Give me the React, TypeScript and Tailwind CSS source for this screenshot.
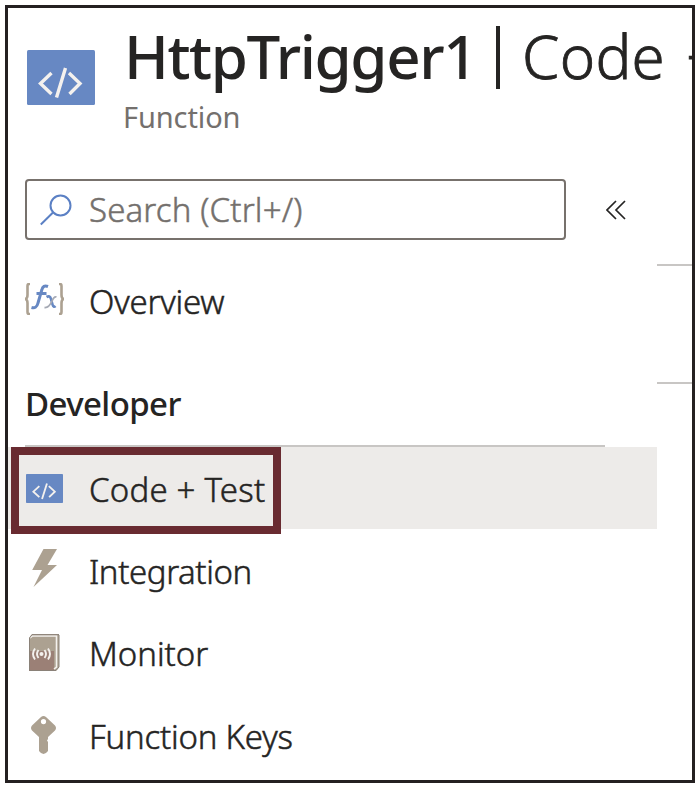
import type { ReactNode } from "react";

function CodeIcon({ className }: { className: string }) {
  return (
    <svg className={className} viewBox="0 0 68 55" preserveAspectRatio="none">
      <rect width="68" height="55" rx="1.5" fill="#6788c3" />
      <g fill="none" stroke="#f4f1ee" strokeWidth="3.400">
        <path d="M24.500 23L13.500 33.500L24.500 44M42 23L53 33.500L42.500 44M38.500 18L29.500 47.500" />
      </g>
    </svg>
  );
}

function SearchIcon() {
  return (
    <svg className="h-8 w-8" viewBox="0 0 32 32" fill="none" stroke="#5b80c4" strokeWidth="2">
      <circle cx="20.500" cy="11.500" r="10" />
      <path d="M13 18.500L.8 30.500" />
    </svg>
  );
}

function FunctionIcon() {
  return (
    <svg className="-mt-1 h-8 w-[40px]" viewBox="0 0 40 32" fill="none">
      <path
        d="M5 1H4Q2.500 1 2.500 3V12Q2.500 15.500.3 16Q2.500 16.500 2.500 20V29Q2.500 31 4 31H5M34 1h1Q36.500 1 36.500 3V12Q36.500 15.500 38.700 16Q36.500 16.500 36.500 20V29Q36.500 31 35 31H34"
        stroke="#aca191"
        strokeWidth="2.600"
      />
      <path d="M23 3.500Q18 1.500 16.800 7L13 20Q11.500 26 6.500 24.500M11.500 10.500H21.500" stroke="#6788c3" strokeWidth="3" />
      <path d="M21.500 14Q25 12 26 16L27.500 21.500Q28.500 25 30.500 23" stroke="#6788c3" strokeWidth="2.600" />
      <path d="M31.500 14Q29 13 27 18Q24 25 19.500 24.500" stroke="#a5a9b4" strokeWidth="1.800" />
    </svg>
  );
}

function BoltIcon() {
  return (
    <svg className="-mt-1 ml-[7px] h-[38px] w-[26px]" viewBox="0 0 26 38" fill="#aca191">
      <path d="M11.500 0H25L15.500 16H25L1.500 38L10 21H.2Z" />
    </svg>
  );
}

function MonitorIcon() {
  return (
    <svg className="ml-[3px] h-[37px] w-8" viewBox="0 0 32 37" fill="none">
      <path d="M4 0H31V33L28 37H1V4Z" fill="#aca191" />
      <path d="M1 17H26V37H1Z" fill="#82504d" fillOpacity=".4" />
      <path d="M2 4L4.500 2H28.500V33L26 35" stroke="#f4f1ee" strokeWidth="1.600" />
      <path d="M31 1V33L28 36.500H1.500V4L4 .7H31" stroke="#8a8178" strokeWidth="1" />
      <circle cx="13.500" cy="20" r="2" fill="#f4f1ee" />
      <path d="M10.500 16Q7.500 20 10.500 24M16.500 16Q19.500 20 16.500 24M7 14.500Q3 20 7 25.500M20 14.500Q24 20 20 25.500" stroke="#f4f1ee" strokeWidth="1.900" />
    </svg>
  );
}

function KeyIcon() {
  return (
    <svg className="ml-[6px] h-[38px] w-[25px]" viewBox="0 0 25 38" fill="#aca191">
      <path
        fillRule="evenodd"
        d="M10 1Q12.500-1 15 1L24 9.500Q26 12 24 14.500L17 21V23L16 24.500L17 26V35Q12.500 41 8 35V21L1 14.500Q-1 12 1 9.500ZM12.500 3A2.600 2.600 0 1 0 12.500 8.200A2.600 2.600 0 1 0 12.500 3Z"
      />
    </svg>
  );
}

function MenuItem({ icon, children }: { icon: ReactNode; children: ReactNode }) {
  return (
    <div className="flex h-[82.500px] items-center pl-[17px]">
      <div className="flex w-[64px] shrink-0">{icon}</div>
      {children}
    </div>
  );
}

const label = "whitespace-nowrap pt-[2px] leading-none text-[#252423] font-light [-webkit-text-stroke:0.5px_#252423]";

export default function App() {
  return (
    <div className="h-[788px] w-[700px] overflow-hidden bg-white pl-[5px] pt-[5px] font-['Noto_Sans',sans-serif] text-[33px]">
      <div className="flex h-[778px] w-[690px] overflow-hidden border-[3px] border-[#242021]">
        <main className="w-[649px] shrink-0">
          <header className="flex h-[171px] pl-[19px]">
            <CodeIcon className="mt-[42px] h-[55px] w-[68px] shrink-0" />
            <div className="ml-[28px] mt-[19px]">
              <h1 className="flex h-[60px] w-[567px] items-center whitespace-nowrap pl-px text-[60px] leading-none text-[#252423]">
                <span className="-mt-[3px] w-[372px] shrink-0 font-medium tracking-[-1.4px]">HttpTrigger1</span>
                <span className="h-[63px] w-[4px] shrink-0 bg-[#252423]" />
                <span className="-mt-[3px] ml-[22px] w-[164px] shrink-0 font-light tracking-[0.3px] [-webkit-text-stroke:0.8px_#252423]">Code</span>
                <span className="-mt-[3px] font-light [-webkit-text-stroke:0.8px_#252423]">+</span>
              </h1>
              <p className="mt-[15px] text-[29px] leading-none tracking-[-0.1px] text-[#74706d]">Function</p>
            </div>
          </header>
          <div className="flex items-center pl-[17px]">
            <div className="flex h-[61px] w-[541px] items-center rounded-[4px] border-2 border-[#77716c] pl-[13px] text-[#74706d]">
              <SearchIcon />
              <span className="-mt-px ml-[17px] whitespace-nowrap font-light leading-none tracking-[0.15px] [-webkit-text-stroke:0.5px_#74706d]">Search (Ctrl+/)</span>
            </div>
            <svg className="ml-[40px] h-5 w-5" viewBox="0 0 20 20" fill="none" stroke="#252423" strokeWidth="1.700">
              <path d="M10 1L1 10L10 19M19 1L10 10L19 19" />
            </svg>
          </div>
          <nav>
            <div className="flex h-[122px] items-center pl-[17px]">
              <div className="w-[64px]"><FunctionIcon /></div>
              <span className={`${label} -mt-0.5 tracking-[-0.2px]`}>Overview</span>
            </div>
            <h2 className="ml-[17px] flex h-[85px] w-[580px] items-center border-b-2 border-[#c8c6c4] font-medium leading-none tracking-[-0.6px] text-[#252423]">Developer</h2>
            <div className="relative h-[82px] bg-[#edebe9]">
              <div className="absolute left-[3px] top-0 h-[87px] w-[270px] border-8 border-[#692b31]" />
              <MenuItem icon={<CodeIcon className="ml-px h-[29px] w-[37px]" />}><span className={`${label} tracking-[0.2px]`}>Code + Test</span></MenuItem>
            </div>
            <MenuItem icon={<BoltIcon />}><span className={`${label} tracking-[-0.4px]`}>Integration</span></MenuItem>
            <MenuItem icon={<MonitorIcon />}><span className={label}>Monitor</span></MenuItem>
            <MenuItem icon={<KeyIcon />}><span className={`${label} tracking-[-0.2px]`}>Function Keys</span></MenuItem>
          </nav>
        </main>
        <aside className="flex flex-1 flex-col pt-[256px]">
          <div className="h-[118px] border-t-2 border-[#c8c6c4]" />
          <div className="border-t-2 border-[#c8c6c4]" />
        </aside>
      </div>
    </div>
  );
}
